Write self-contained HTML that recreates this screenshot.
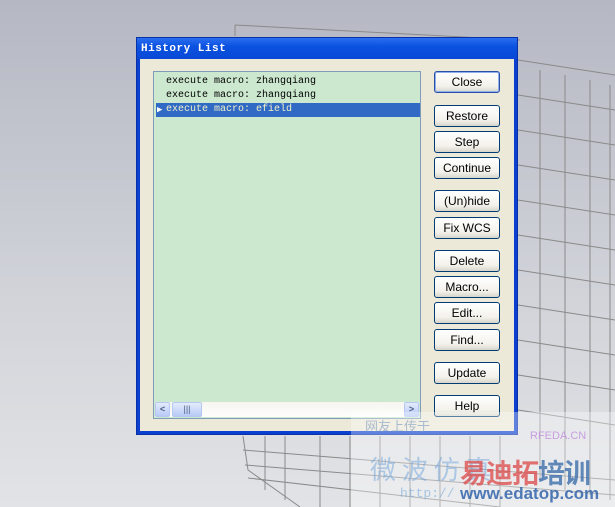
<!DOCTYPE html>
<html><head><style>
body{margin:0;width:615px;height:507px;overflow:hidden;position:relative;background:linear-gradient(#b5b8c3,#d2d4da 60%,#e2e3e6);font-family:"Liberation Sans",sans-serif}
.dlg{position:absolute;left:136px;top:37px;width:382px;height:398px;background:#0a3fd0;box-sizing:border-box;border:1px solid #0831a8}
.title{position:absolute;left:0;top:0;right:0;height:21px;background:linear-gradient(#2a6df0,#0b52e0 40%,#0a48d6);color:#fff;font:bold 11px "Liberation Mono",monospace;line-height:22px;padding-left:4px;letter-spacing:0.5px}
.client{position:absolute;left:3px;top:21px;right:3px;bottom:3px;background:#ece9d8}
.list{position:absolute;left:13px;top:12px;width:268px;height:348px;background:#cce8cf;border:1px solid #7f9db9;box-sizing:border-box}
.row{position:absolute;left:2px;height:14px;width:264px;font:10px "Liberation Mono",monospace;line-height:14px;padding-left:10px;box-sizing:border-box;color:#000}
.sel{background:#316ac5;color:#f0f0c8}
.hs{position:absolute;left:1px;bottom:1px;width:264px;height:15px;background:linear-gradient(#f6f5f0,#fdfdfb)}
.sb{position:absolute;top:0;width:15px;height:15px;background:linear-gradient(#e4ebfd,#b7c9f5);border:1px solid #b5c8f2;box-sizing:border-box;border-radius:2px;font-size:9px;color:#4d6185;text-align:center;line-height:13px;font-weight:bold}
.btn{position:absolute;left:294px;width:66px;height:22px;box-sizing:border-box;border:1px solid #003c74;border-radius:3px;background:linear-gradient(#fff,#f3f2ec 70%,#d8d6cb);font-size:12px;text-align:center;line-height:20px;color:#000}
.wm{position:absolute;font-weight:bold}
</style></head><body>
<svg style="position:absolute;left:0;top:0" width="615" height="507">
<g stroke="#8a8a8a" stroke-width="1" fill="none">
<path d="M235 25 L520 40 M518 60 L615 75 M518 95 L615 110 M518 130 L615 145 M518 165 L615 180 M518 200 L615 215 M518 235 L615 250 M518 270 L615 285 M518 305 L615 320 M518 340 L615 355 M518 375 L615 390 M518 410 L615 425 M540 70 L540 480 M565 75 L565 490 M590 80 L590 495 M610 85 L610 500 M235 25 L235 36"/>
<path d="M243 436 L248 470 L300 507 M265 436 L265 490 M285 436 L285 500 M320 436 L320 507 M350 436 L350 507 M380 436 L380 507 M410 436 L410 507 M440 436 L440 507 M470 436 L470 507 M500 436 L500 507 M243 450 L615 480 M245 465 L615 495 M248 478 L500 507"/>
</g>
</svg>
<div class="dlg"><div class="title">History List</div>
<div class="client">
<div class="list">
<div class="row" style="top:3px">execute macro: zhangqiang</div>
<div class="row" style="top:17px">execute macro: zhangqiang</div>
<div class="row sel" style="top:31px"><span style="position:absolute;left:1px;color:#fff;font-size:9px">▶</span>execute macro: efield</div>
<div class="hs"><div class="sb" style="left:0">&lt;</div><div class="sb" style="left:17px;width:30px;font-weight:normal">|||</div><div class="sb" style="right:0">&gt;</div></div>
</div>
<div class="btn" style="top:12px;border-color:#2a4fa8;box-shadow:inset 0 0 0 1px #8fb0ea">Close</div>
<div class="btn" style="top:46px">Restore</div>
<div class="btn" style="top:72px">Step</div>
<div class="btn" style="top:98px">Continue</div>
<div class="btn" style="top:131px">(Un)hide</div>
<div class="btn" style="top:158px">Fix WCS</div>
<div class="btn" style="top:191px">Delete</div>
<div class="btn" style="top:217px">Macro...</div>
<div class="btn" style="top:243px">Edit...</div>
<div class="btn" style="top:270px">Find...</div>
<div class="btn" style="top:303px">Update</div>
<div class="btn" style="top:336px">Help</div>
</div></div>
<div style="position:absolute;left:351px;top:412px;width:264px;height:95px;background:rgba(255,255,255,0.35)"></div>
<div class="wm" style="left:365px;top:416px;font-size:13px;color:rgba(120,150,190,0.6);font-weight:normal;font-family:'Noto Sans CJK SC',sans-serif">网友上传于</div>
<div class="wm" style="left:530px;top:430px;font-size:11px;color:rgba(190,140,220,0.8);font-weight:normal">RFEDA.CN</div>
<div class="wm" style="left:370px;top:450px;font-size:26px;color:rgba(120,170,220,0.55);font-weight:normal;font-family:'Noto Sans CJK SC',sans-serif">微 波 仿 真</div>
<div class="wm" style="left:460px;top:452px;font-size:27px;color:rgba(220,70,70,0.75);font-family:'Noto Sans CJK SC',sans-serif;letter-spacing:-1px">易迪拓<span style="color:rgba(60,110,170,0.8)">培训</span></div>
<div class="wm" style="left:460px;top:484px;font-size:17px;color:rgba(50,100,170,0.85)">www.edatop.com</div>
<div class="wm" style="left:400px;top:486px;font-size:13px;color:rgba(120,170,220,0.6);font-weight:normal;font-family:'Liberation Mono',monospace">http://</div>
</body></html>
